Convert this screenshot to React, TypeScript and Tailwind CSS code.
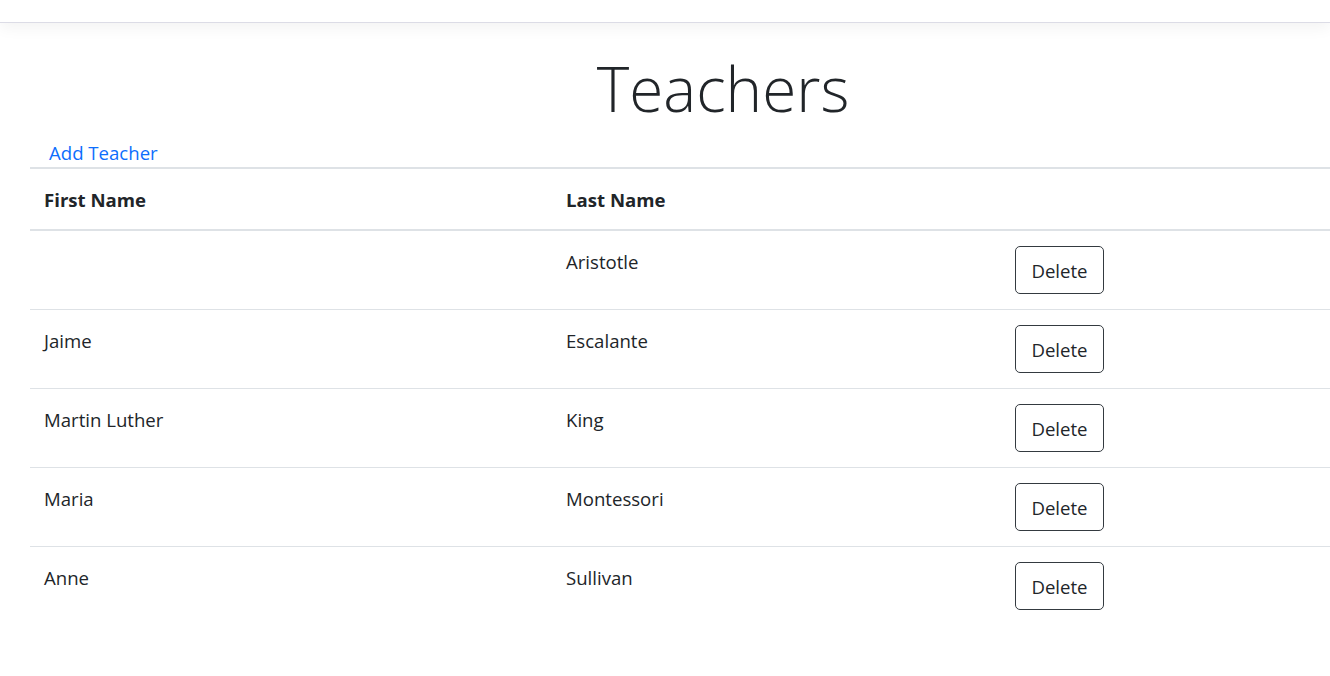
import React from "react";

const rows: [string, string][] = [
  ["", "Aristotle"],
  ["Jaime", "Escalante"],
  ["Martin Luther", "King"],
  ["Maria", "Montessori"],
  ["Anne", "Sullivan"],
];

export default function App() {
  return (
    <div
      className="min-h-[676px] w-[1330px] overflow-hidden bg-white text-[#212529] text-[18.6px] leading-[30px]"
      style={{ fontFamily: '"Open Sans", "Noto Sans", sans-serif' }}
    >
      <div className="h-[23px] border-b border-[#dcdce6] shadow-[0_5px_15px_rgba(0,0,0,0.05)]" />
      <div className="pl-[30px]">
        <div className="pl-[86px] pt-[23px] text-center">
          <h1 className="text-[62px] leading-[84px] font-light">Teachers</h1>
        </div>
        <p className="mt-[7px] pl-[19px] h-[30px] leading-[32px]">
          <a className="text-[#0d6efd] cursor-pointer">Add Teacher</a>
        </p>
        <table className="w-[1300px] border-collapse table-fixed">
          <colgroup>
            <col className="w-[521px]" />
            <col className="w-[449px]" />
            <col className="w-[330px]" />
          </colgroup>
          <thead>
            <tr>
              <th className="text-left font-bold px-[14px] pt-[16px] pb-[14px] leading-[30px] align-bottom border-t-2 border-b-2 border-[#dee2e6]">
                First Name
              </th>
              <th className="text-left font-bold px-[15px] pt-[16px] pb-[14px] leading-[30px] align-bottom border-t-2 border-b-2 border-[#dee2e6]">
                Last Name
              </th>
              <th className="px-[15px] pt-[16px] pb-[14px] leading-[30px] border-t-2 border-b-2 border-[#dee2e6]"></th>
            </tr>
          </thead>
          <tbody>
            {rows.map(([f, l], i) => (
              <tr key={i} className={i === 0 ? "" : "border-t border-[#dee2e6]"}>
                <td className="px-[14px] pt-[16px] pb-[14px] align-top leading-[30px]">{f}</td>
                <td className="px-[15px] pt-[16px] pb-[14px] align-top leading-[30px]">{l}</td>
                <td className="px-[15px] py-[15px] align-top">
                  <button className="w-[89px] h-[48px] border border-[#343a40] rounded-[5px] text-[#212529] text-[18.6px] leading-[30px] bg-white pt-[1px]">
                    Delete
                  </button>
                </td>
              </tr>
            ))}
          </tbody>
        </table>
      </div>
    </div>
  );
}
